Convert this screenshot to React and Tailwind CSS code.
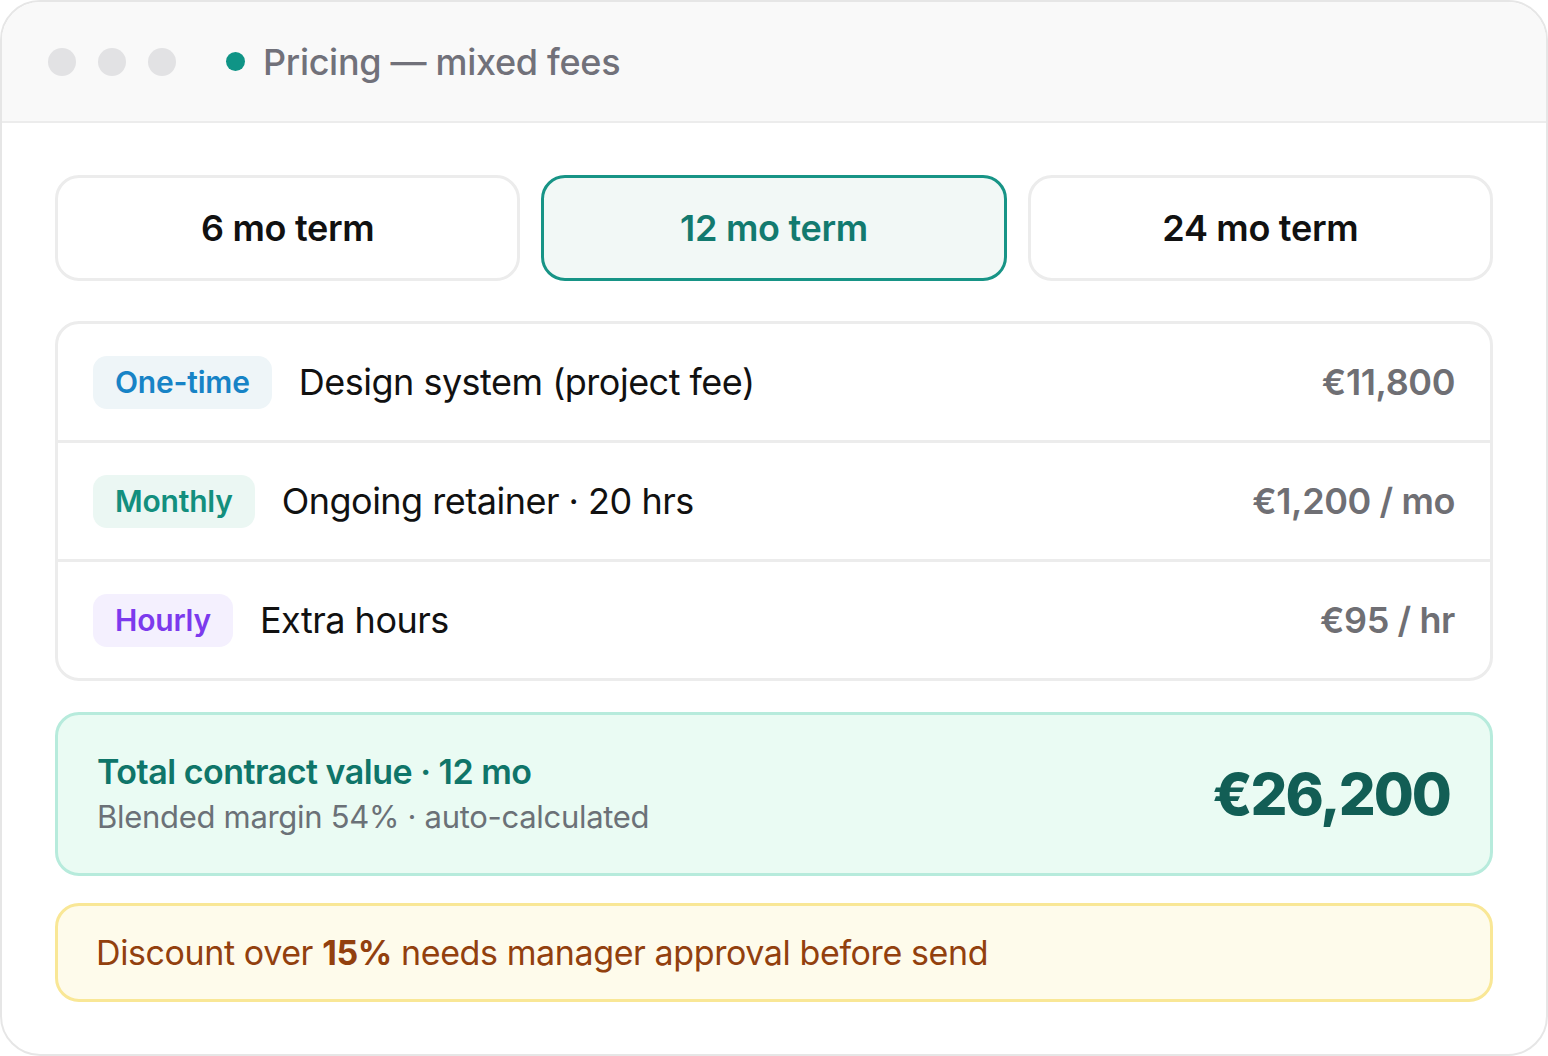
import React from "react";

const terms = [
  { label: "6 mo term", active: false },
  { label: "12 mo term", active: true },
  { label: "24 mo term", active: false },
];

const items = [
  {
    tag: "One-time",
    tagCls: "bg-[#eef5f8] text-[#1783c6]",
    desc: "Design system (project fee)",
    price: "€11,800",
  },
  {
    tag: "Monthly",
    tagCls: "bg-[#ebf7f3] text-[#138f7e]",
    desc: "Ongoing retainer · 20 hrs",
    price: "€1,200 / mo",
  },
  {
    tag: "Hourly",
    tagCls: "bg-[#f4f0fe] text-[#7c3aed]",
    desc: "Extra hours",
    price: "€95 / hr",
  },
];

export default function App() {
  return (
    <div
      className="w-[1548px] h-[1056px] bg-white"
      style={{ fontFamily: "Inter, 'Liberation Sans', sans-serif" }}
    >
      <div className="w-full h-full border-2 border-[#e6e6e6] rounded-[40px] overflow-hidden flex flex-col bg-white">
        <div className="h-[121px] shrink-0 bg-[#f9f9f9] border-b-2 border-[#ececec] flex items-center pl-[46px]">
          <div className="flex items-center gap-[22px]">
            <span className="w-[28px] h-[28px] rounded-full bg-[#e2e2e4]" />
            <span className="w-[28px] h-[28px] rounded-full bg-[#e2e2e4]" />
            <span className="w-[28px] h-[28px] rounded-full bg-[#e2e2e4]" />
          </div>
          <span className="ml-[50px] w-[19px] h-[19px] rounded-full bg-[#0f9486]" />
          <span className="ml-[18px] text-[36px] font-medium text-[#71717a] tracking-[-0.3px]">
            Pricing — mixed fees
          </span>
        </div>

        <div className="flex-1 flex flex-col px-[53px] pt-[52px]">
          <div className="grid grid-cols-3 gap-[21px]">
            {terms.map((t) => (
              <div
                key={t.label}
                className={
                  t.active
                    ? "h-[106px] rounded-[24px] border-[3px] border-[#179486] bg-[#f2f8f6] flex items-center justify-center text-[36px] font-semibold text-[#137a6f] tracking-[-0.3px]"
                    : "h-[106px] rounded-[24px] border-[3px] border-[#ececec] bg-white flex items-center justify-center text-[36px] font-semibold text-[#111111] tracking-[-0.3px]"
                }
              >
                {t.label}
              </div>
            ))}
          </div>

          <div className="mt-[40px] rounded-[24px] border-[3px] border-[#ececec] flex flex-col">
            {items.map((it, i) => (
              <div
                key={it.tag}
                className={
                  i > 0
                    ? "h-[119px] flex items-center pl-[35px] pr-[35px] border-t-[3px] border-[#ececec]"
                    : "h-[116px] flex items-center pl-[35px] pr-[35px]"
                }
              >
                <span
                  className={
                    "h-[53px] px-[22px] rounded-[14px] flex items-center text-[30px] font-semibold tracking-[-0.2px] " +
                    it.tagCls
                  }
                >
                  {it.tag}
                </span>
                <span className="ml-[27px] text-[36px] text-[#111111] tracking-[-0.5px]">
                  {it.desc}
                </span>
                <span className="ml-auto text-[36px] font-semibold text-[#6f6f74] tracking-[-0.4px]">
                  {it.price}
                </span>
              </div>
            ))}
          </div>

          <div className="mt-[31px] h-[164px] rounded-[24px] border-[3px] border-[#b7ebdc] bg-[#eafbf3] flex items-center pl-[39px] pr-[40px]">
            <div className="flex flex-col">
              <span className="text-[34px] font-semibold text-[#0f7569] tracking-[-0.5px] leading-[46px]">
                Total contract value · 12 mo
              </span>
              <span className="text-[31px] text-[#6b7177] tracking-[-0.3px] leading-[44px]">
                Blended margin 54% · auto-calculated
              </span>
            </div>
            <span className="ml-auto text-[58px] font-extrabold text-[#125e55] tracking-[-2px]">
              €26,200
            </span>
          </div>

          <div className="mt-[27px] h-[99px] rounded-[24px] border-[3px] border-[#f9e796] bg-[#fefbeb] flex items-center pl-[38px]">
            <span className="text-[34px] text-[#92400e] tracking-[-0.4px]">
              Discount over <span className="font-bold">15%</span> needs manager approval before send
            </span>
          </div>
        </div>
      </div>
    </div>
  );
}
